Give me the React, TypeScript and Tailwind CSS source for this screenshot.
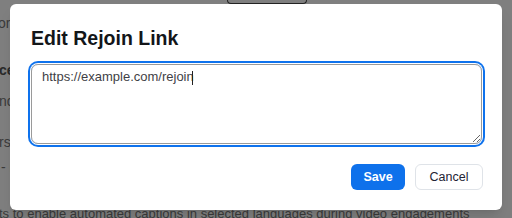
import React, { useEffect, useRef } from "react";

export default function App() {
  const ref = useRef<HTMLTextAreaElement>(null);
  const value = "https://example.com/rejoin";
  useEffect(() => {
    const el = ref.current;
    if (el) {
      el.focus();
      el.setSelectionRange(value.length, value.length);
    }
  }, []);

  return (
    <div
      className="relative w-[512px] h-[218px] overflow-hidden bg-white text-[#777]"
      style={{ fontFamily: '"Liberation Sans", Arial, sans-serif' }}
    >
      {/* background page */}
      <div className="flex flex-col text-[14px] leading-[16px] whitespace-nowrap">
        <div className="ml-[227px] w-[80px] h-[4px] border border-t-0 border-[#444] rounded-b-[7px] bg-white" />
        <div className="mt-[11px] -ml-[2px]">ore options</div>
        <div className="mt-[31px] -ml-[1px] font-bold text-[#555]">ce settings</div>
        <div className="mt-[15px] -ml-[1px]">nd</div>
        <div className="mt-[25px] -ml-[1px]">rs</div>
        <div className="mt-[9px] ml-[1px]">- n</div>
        <div className="mt-[31px] -ml-[1px] text-[13px]">
          ts to enable automated captions in selected languages during video engagements
        </div>
      </div>

      {/* overlay */}
      <div className="absolute inset-0 bg-black/50" />

      {/* modal */}
      <div className="absolute left-[10px] top-[4px] w-[492px] rounded-[6px] bg-white shadow-lg pt-[22px] pb-[20px] pl-[21px] pr-[20px] flex flex-col">
        <h2 className="text-[19.5px] leading-[24px] font-bold text-[#131619]">Edit Rejoin Link</h2>
        <div className="relative mt-[14px]">
          <textarea
            ref={ref}
            defaultValue={value}
            className="block h-[80px] w-full rounded-[7px] border border-[#9a9a9a] px-[10px] py-[4px] text-[13px] leading-[15px] text-[#3f3f46] outline-none ring-2 ring-[#0e72ed] ring-offset-1 ring-offset-white caret-transparent"
            style={{ fontFamily: '"Liberation Sans", Arial, sans-serif' }}
          />
          <span className="pointer-events-none absolute left-[161px] top-[7px] h-[14px] w-px bg-[#222]" />
        </div>
        <div className="mt-[20px] flex justify-end gap-[10px]">
          <button className="h-[26px] w-[54px] rounded-[6px] bg-[#0e71eb] text-white text-[12.5px] font-bold">
            Save
          </button>
          <button className="h-[26px] w-[68px] rounded-[6px] border border-[#dfe3e8] bg-white text-[#232333] text-[12.5px] mr-[-1px]">
            Cancel
          </button>
        </div>
      </div>
    </div>
  );
}
